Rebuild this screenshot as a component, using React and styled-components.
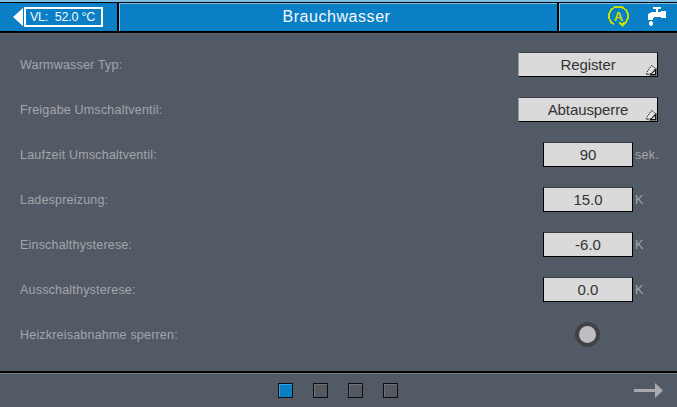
import React from 'react';
import styled, { createGlobalStyle } from 'styled-components';

const Global = createGlobalStyle`
  html, body { margin: 0; padding: 0; background: #525a66; }
  #root { width: 677px; height: 407px; overflow: hidden; }
`;
const Screen = styled.div`
  width: 677px; height: 407px; display: flex; flex-direction: column;
  background: #525a66; font-family: "Liberation Sans", Arial, sans-serif;
`;
const Header = styled.header`
  height: 29px; flex: none; display: grid; grid-template-columns: 117px 2px 1fr 2px 118px;
  background: #0b7fc6; border-top: 2px solid #7fbfe6;
  border-bottom: 2px solid #000; box-shadow: inset 0 1px 0 #000;
`;
const Divider = styled.div`background: #000;`;
const Cell = styled.div`
  display: flex; align-items: center; min-width: 0; margin-top: 1px;
  ${p => p.$inner && 'border-left: 1px solid #7fbfe6; border-top: 1px solid #7fbfe6;'}
`;
const BackCell = styled(Cell)`padding-left: 13px;`;
const Tip = styled.div`
  width: 0; height: 0; border-style: solid; border-width: 9px 10px 9px 0; margin-top: -1px;
  border-color: transparent #fff transparent transparent; margin-right: 1px;
`;
const ValueBox = styled.div`
  width: 73px; height: 16px; border: 2px solid #fff; margin-top: -1px; color: #f4f9fc; font-size: 12.5px; letter-spacing: -.2px;
  display: flex; align-items: center; justify-content: center; white-space: pre; padding-right: 2px;
`;
const Title = styled(Cell)`
  justify-content: center; color: #f4f9fc; font-size: 16px; letter-spacing: .55px; padding: 0 4px 1px 0;
`;
const IconCell = styled(Cell)`padding: 0 0 2px 48px; gap: 19px;`;
const Body = styled.main`
  flex: 1; display: flex; flex-direction: column; padding: 8px 0 0 20px; border-top: 1px solid #62666c;
`;
const Row = styled.div`
  height: 45px; flex: none; display: grid; grid-template-columns: 498px 1fr; align-items: center;
`;
const Label = styled.span`color: #a4a6aa; font-size: 12.5px; letter-spacing: .2px;`;
const Control = styled.div`display: flex; align-items: center; padding-left: ${p => p.$inset || 0}px;`;
const SelectButton = styled.div`
  position: relative; width: 140px; height: 25px; box-sizing: border-box; background: #dadada;
  border-top: 1px solid #3b3f45; border-left: 1px solid #9a9a9a; border-right: 1px solid #000; border-bottom: 1px solid #000;
  color: #333; font-size: 15px; letter-spacing: -.1px; display: flex; align-items: center; justify-content: center;
`;
const Corner = styled.svg`position: absolute; right: 0; bottom: 0;`;
const NumberBox = styled.div`
  width: 90px; height: 25px; box-sizing: border-box; background: #dadada;
  border-top: 1px solid #3b3f45; border-left: 1px solid #000; border-right: 1px solid #000; border-bottom: 1px solid #000;
  color: #333; font-size: 15px; display: flex; align-items: center; justify-content: center;
`;
const Unit = styled.span`color: #a4a6aa; font-size: 12.5px; letter-spacing: .3px; padding-left: 2px;`;
const Radio = styled.div`
  width: 25px; height: 25px; box-sizing: border-box; border-radius: 50%; background: #bdbdc2;
  border: 4.5px solid #3f4343;
`;
const Footer = styled.footer`
  height: 34px; flex: none; margin-top: auto; display: flex; align-items: center; justify-content: center; gap: 20px;
  position: relative; border-top: 2px solid #000; box-shadow: inset 0 1px 0 #777a7e; padding-right: 2px;
`;
const Dot = styled.span`
  width: 15px; height: 15px; box-sizing: border-box; border: 1px solid #0b0f14;
  background: ${p => (p.$active ? '#0b7fc6' : '#55585e')}; box-shadow: inset 1px 1px 0 ${p => (p.$active ? '#3c9ad4' : '#6d7074')};
`;
const Arrow = styled.svg`position: absolute; right: 13px; top: 10px;`;

const rows = [
  ['Laufzeit Umschaltventil:', '90', 'sek.'],
  ['Ladespreizung:', '15.0', 'K'],
  ['Einschalthysterese:', '-6.0', 'K'],
  ['Ausschalthysterese:', '0.0', 'K'],
];

const CornerIcon = () => (
  <Corner width="11" height="11" viewBox="0 0 11 11">
    <path d="M5.5 .5 L9.5 3.5 L6 8.5 L.5 9.5 L1 7 Z" fill="#e4e4e4" stroke="#222" strokeWidth="1" strokeDasharray="1.6 .8" />
    <path d="M10.5 3 V10.5 H3 Z" fill="#111" />
    <path d="M9 6 V9 H5.5 Z" fill="#dadada" />
  </Corner>
);

export default function App() {
  return (
    <Screen>
      <Global />
      <Header>
        <BackCell>
          <Tip />
          <ValueBox>VL:  52.0 °C</ValueBox>
        </BackCell>
        <Divider />
        <Title $inner>Brauchwasser</Title>
        <Divider />
        <IconCell $inner>
          <svg width="21" height="21" viewBox="0 0 21 21" fill="none" shapeRendering="crispEdges">
            <path d="M14 18.5 L18 16 L20 12 V8 L18 4 L14 1 H7 L3 4 L1 8 V12 L3 16 L6 18.5" stroke="#c8e000" strokeWidth="1.8" />
            <path d="M11.5 16.5 L14.5 19.5 L17 17" stroke="#c8e000" strokeWidth="1.6" />
            <text x="10.5" y="15" textAnchor="middle" fontSize="13" fontWeight="700" fontFamily="Liberation Sans" fill="#c8e000">A</text>
          </svg>
          <svg width="18" height="19" viewBox="0 0 18 19" shapeRendering="crispEdges">
            <path d="M5 0 H13 V2 H10 V5 H13 V4 H18 V11 H13 V10 H7 Q5 10 5 12 V13 H0 V10 Q0 5 5 5 H8 V2 H5 Z" fill="#fff" />
            <path d="M2 14 H4 V15 H5 V18 H4 V19 H2 V18 H1 V15 H2 Z" fill="#fff" />
          </svg>
        </IconCell>
      </Header>
      <Body>
        <Row>
          <Label>Warmwasser Typ:</Label>
          <Control><SelectButton>Register<CornerIcon /></SelectButton></Control>
        </Row>
        <Row>
          <Label>Freigabe Umschaltventil:</Label>
          <Control><SelectButton>Abtausperre<CornerIcon /></SelectButton></Control>
        </Row>
        {rows.map(([label, value, unit]) => (
          <Row key={label}>
            <Label>{label}</Label>
            <Control $inset={25}>
              <NumberBox>{value}</NumberBox>
              <Unit>{unit}</Unit>
            </Control>
          </Row>
        ))}
        <Row>
          <Label>Heizkreisabnahme sperren:</Label>
          <Control $inset={57}><Radio /></Control>
        </Row>
      </Body>
      <Footer>
        <Dot $active />
        <Dot />
        <Dot />
        <Dot />
        <Arrow width="30" height="16" viewBox="0 0 30 16">
          <path d="M0 6 H21 V0 L29 7.5 L21 15 V9 H0 Z" fill="#aaaaae" />
        </Arrow>
      </Footer>
    </Screen>
  );
}
